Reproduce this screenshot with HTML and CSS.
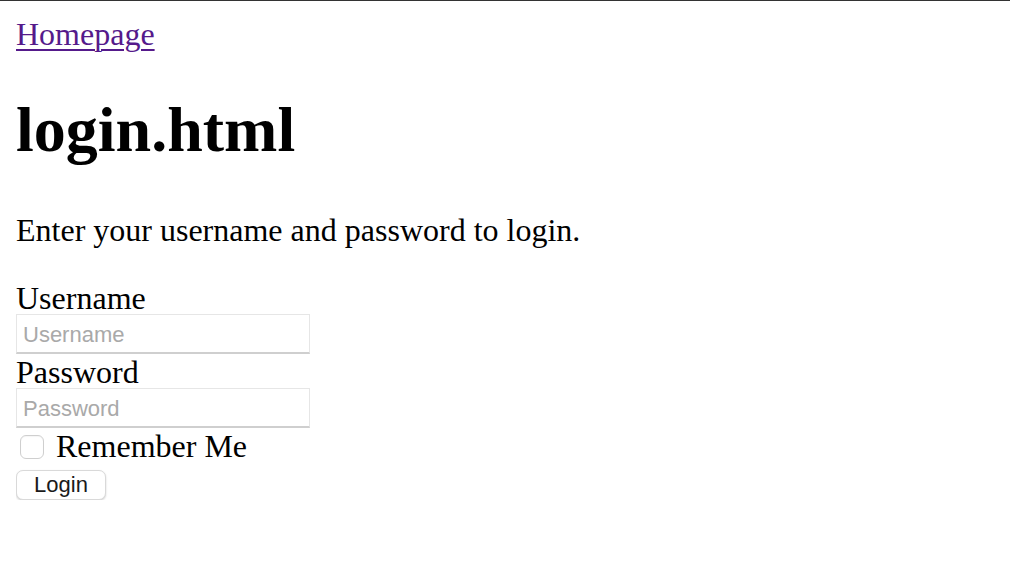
FILE: index.html
```html
<!DOCTYPE html>
<html>
<head>
<meta charset="utf-8">
<link rel="stylesheet" href="styles.css">
</head>
<body>
<a class="home" href="#">Homepage</a>
<h1 class="title">login.html</h1>
<p class="intro">Enter your username and password to login.</p>
<form class="login">
  <label class="lbl" for="u">Username</label>
  <input class="field" id="u" type="text" placeholder="Username">
  <label class="lbl" for="p">Password</label>
  <input class="field" id="p" type="password" placeholder="Password">
  <div class="remember">
    <input class="check" type="checkbox" id="r">
    <label class="rlbl" for="r">Remember Me</label>
  </div>
  <button class="btn" type="button">Login</button>
</form>
</body>
</html>
```
FILE: styles.css
```css
html {
  border-top: 1px solid #333;
}
body {
  margin: 15px 16px;
  font-family: "Liberation Serif", "Times New Roman", serif;
  font-size: 32px;
  line-height: 1.15;
  color: #000;
  background: #fff;
}
.home {
  color: #551a8b;
  text-decoration: underline;
  text-decoration-thickness: 2px;
  text-underline-offset: 4px;
}
.title {
  font-size: 64px;
  font-weight: bold;
  margin: 40px 0 46px;
  line-height: 1.15;
}
.intro {
  margin: 0 0 33px;
}
.login {
  display: flex;
  flex-direction: column;
  align-items: flex-start;
}
.lbl {
  display: block;
  line-height: 32px;
}
.field {
  -webkit-appearance: none;
  appearance: none;
  box-sizing: border-box;
  width: 294px;
  height: 40px;
  margin: 0 0 2px;
  padding: 3px 6px 0;
  border: 1px solid #e6e6e6;
  border-bottom: 2px solid #cfcfcf;
  border-radius: 0;
  background: #fff;
  font-family: "Liberation Sans", Arial, sans-serif;
  font-size: 22px;
  color: #000;
  outline: none;
}
.field::placeholder {
  color: #a9a9a9;
}
.remember {
  display: flex;
  align-items: center;
  height: 36px;
  margin-top: -2px;
}
.check {
  -webkit-appearance: none;
  appearance: none;
  box-sizing: border-box;
  width: 24px;
  height: 24px;
  margin: 2px 12px 0 4px;
  border: 1px solid #cfcfcf;
  border-radius: 6px;
  background: #fff;
  box-shadow: inset 0 1px 1px rgba(0,0,0,0.04);
}
.rlbl {
  line-height: 36px;
}
.btn {
  -webkit-appearance: none;
  appearance: none;
  box-sizing: border-box;
  width: 90px;
  height: 30px;
  margin: 6px 0 0;
  padding: 0;
  border: 1px solid #d9d9d9;
  border-radius: 7px;
  background: #fff;
  box-shadow: 0 1px 2px rgba(0,0,0,0.18);
  font-family: "Liberation Sans", Arial, sans-serif;
  font-size: 22px;
  color: #1a1a1a;
}
```
